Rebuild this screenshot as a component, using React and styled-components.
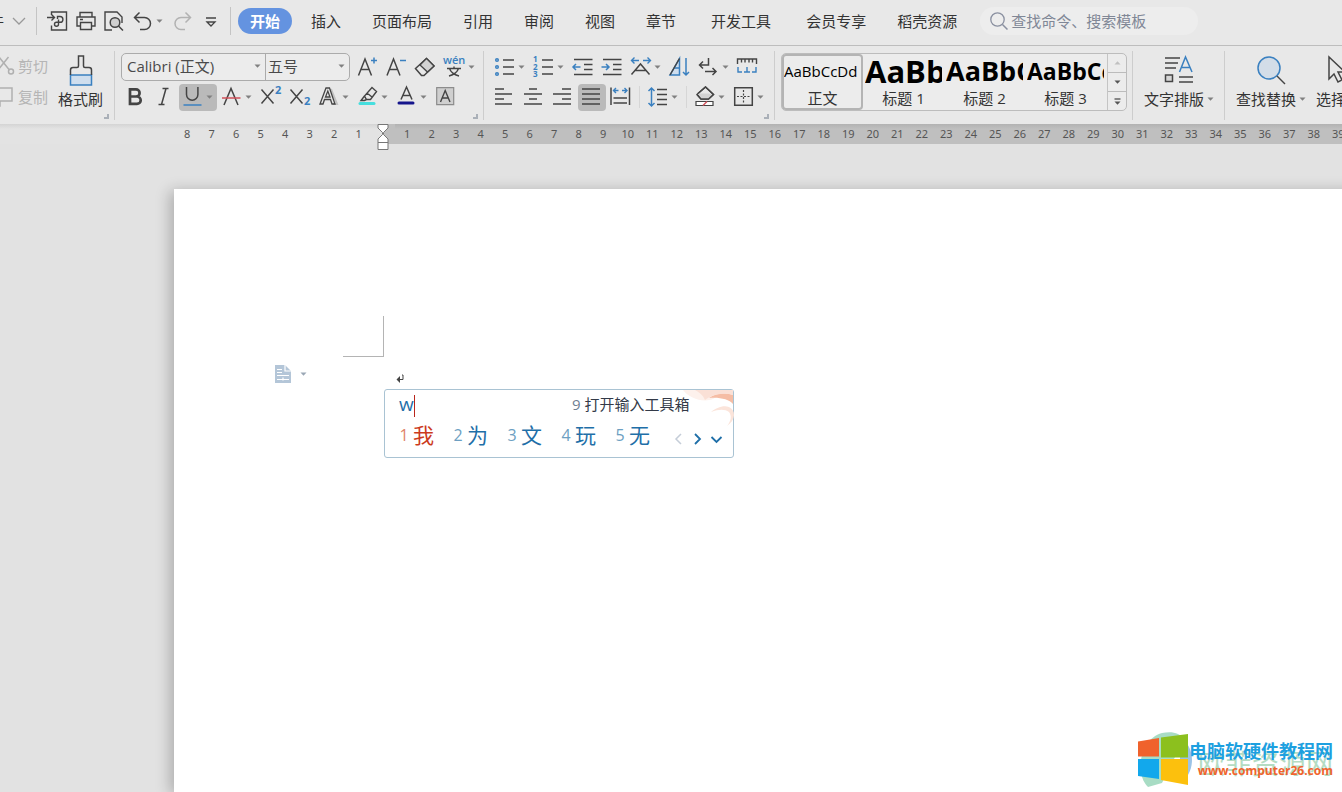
import React from "react";
import styled, { createGlobalStyle, css } from "styled-components";

const INK = "#444444";
const BLUE = "#3a80c0";

const Global = createGlobalStyle`
  * { box-sizing: border-box; }
  html, body { margin: 0; padding: 0; }
  body { background: #e2e2e2; overflow: hidden; font-family: "Open Sans", "Noto Sans CJK SC", sans-serif; font-size: 15px; line-height: 20px; color: #333; }
  button { font: inherit; color: inherit; background: none; border: 0; padding: 0; margin: 0; cursor: pointer; white-space: nowrap; }
  svg { display: block; flex: none; fill: none; stroke: ${INK}; stroke-width: 1.5; overflow: visible; }
`;

const Window = styled.main`
  display: flex;
  flex-direction: column;
  height: 100vh;
  overflow: hidden;
  position: relative;
`;

/* ---------- header ---------- */
const Header = styled.header`
  display: flex;
  align-items: center;
  height: 46px;
  padding-bottom: 3px;
  background: #e8e8e8;
  border-bottom: 1px solid #bdbdbd;
  flex: none;
  overflow: hidden;
`;
const FileMenu = styled.button`
  display: flex;
  align-items: center;
  gap: 8px;
  margin-left: -26px;
  width: 62px;
  flex: none;
`;
const VLine = styled.span`
  width: 1px;
  height: 28px;
  background: #c4c4c4;
  flex: none;
`;
const QuickBar = styled.div`
  display: flex;
  align-items: center;
  padding-left: 10px;
  width: 193px;
  flex: none;
`;
const QuickButton = styled.button`
  display: flex;
  align-items: center;
  gap: 3px;
  width: ${(p) => (p.$split ? 41 : 29)}px;
`;
const Tabs = styled.nav`
  display: flex;
  align-items: center;
  gap: 1px;
  padding-left: 7px;
`;
const Tab = styled.button`
  height: 26px;
  padding: 0 15px;
  margin-left: ${(p) => (p.$spaced ? 4 : 0)}px;
  ${(p) =>
    p.$active &&
    css`
      padding: 0 12px;
      margin-right: 3px;
      border-radius: 13px;
      background: #6493e0;
      color: #fff;
      font-weight: 700;
    `}
`;
const Search = styled.label`
  display: flex;
  align-items: center;
  gap: 2px;
  width: 218px;
  height: 28px;
  margin-left: 8px;
  padding-left: 9px;
  border-radius: 14px;
  background: #ededed;
  flex: none;
`;
const SearchInput = styled.input`
  border: 0;
  outline: 0;
  padding: 0;
  background: none;
  font: inherit;
  width: 180px;
  &::placeholder { color: #808796; opacity: 1; }
`;

/* ---------- ribbon ---------- */
const Ribbon = styled.section`
  display: flex;
  height: 78px;
  background: #e8e8e8;
  flex: none;
  overflow: hidden;
`;
const Group = styled.div`
  display: flex;
  flex-direction: column;
  gap: 2px;
  padding: 7px ${(p) => p.$right ?? 5}px 0 ${(p) => p.$left ?? 6}px;
  width: ${(p) => (p.$w ? p.$w + "px" : "auto")};
  flex: none;
`;
const Divider = styled.span`
  width: 1px;
  margin: 5px 0 4px;
  background: #cdcdcd;
  flex: none;
`;
const Row = styled.div`
  display: flex;
  align-items: center;
  height: 28px;
  gap: 1px;
`;
const Launcher = styled.button`
  align-self: flex-end;
  width: 5px;
  height: 5px;
  margin-top: 1px;
  border-right: 2px solid #aab0b8;
  border-bottom: 2px solid #aab0b8;
`;
const ToolButton = styled.button`
  display: flex;
  align-items: center;
  gap: 3px;
  width: ${(p) => (p.$split ? 38 : 28)}px;
  height: 27px;
  padding: 0 4px;
  border-radius: 4px;
  background: ${(p) => (p.$on ? "#bababa" : "transparent")};
  flex: none;
`;
const ThinLine = styled.span`
  width: 1px;
  height: 22px;
  margin: 0 3px 0 3px;
  background: #d6d6d6;
  flex: none;
`;
const ClipRow = styled.div`
  display: flex;
`;
const ClipColumn = styled.div`
  display: flex;
  flex-direction: column;
  gap: 11px;
  width: 58px;
  padding-top: 3px;
`;
const ClipButton = styled.button`
  display: flex;
  align-items: center;
  gap: 4px;
  height: 20px;
  color: #b5b5b5;
  svg { stroke: #b0b0b0; }
`;
const BigButton = styled.button`
  display: flex;
  flex-direction: column;
  align-items: center;
  align-self: flex-start;
  height: 58px;
  gap: 3px;
  padding-top: 2px;
  flex: none;
`;
const BigLabel = styled.span`
  display: flex;
  align-items: center;
  gap: 3px;
  line-height: 20px;
`;
const Combos = styled.div`
  display: flex;
  width: 229px;
  height: 28px;
  margin-right: 3px;
  border: 1px solid #ababab;
  border-radius: 5px;
  background: #ececec;
`;
const Combo = styled.label`
  display: flex;
  align-items: center;
  width: ${(p) => p.$w}px;
  padding: 0 4px 2px ${(p) => p.$pad}px;
  & + & { border-left: 1px solid #ababab; }
`;
const Select = styled.select`
  appearance: none;
  border: 0;
  outline: 0;
  padding: 0;
  background: none;
  font: inherit;
  color: #4a4a4a;
  flex: 1;
  min-width: 0;
`;

/* ---------- style gallery ---------- */
const Gallery = styled.div`
  display: flex;
  width: 346px;
  height: 58px;
  border: 1px solid #bcbcbc;
  border-radius: 5px;
  background: #ececec;
`;
const StyleCard = styled.button`
  display: flex;
  flex-direction: column;
  align-items: center;
  width: 81px;
  padding: 0 2px;
  border-radius: 4px;
  box-shadow: ${(p) => (p.$on ? "inset 0 0 0 2px #b4b4b4" : "none")};
  flex: none;
`;
const Sample = styled.span`
  width: 77px;
  height: 34px;
  line-height: 34px;
  overflow: hidden;
  text-align: left;
  color: #000;
  font-size: ${(p) => p.$size}px;
  font-weight: ${(p) => (p.$size > 16 ? 700 : 400)};
`;
const GalleryScroll = styled.div`
  display: flex;
  flex-direction: column;
  flex: 1;
  margin-left: 1px;
  border-left: 1px solid #c4c4c4;
`;
const ScrollButton = styled.button`
  flex: 1;
  display: flex;
  align-items: center;
  justify-content: center;
  & + & { border-top: 1px solid #bcbcbc; }
`;

/* ---------- ruler ---------- */
const RULER_DARK = "#bfbfbf";
const Ruler = styled.div`
  display: flex;
  height: 20px;
  padding-left: 175px;
  font-family: "Noto Sans", sans-serif;
  font-size: 11px;
  line-height: 20px;
  color: #555;
  background: linear-gradient(#d4d4d4, #e3e3e3 5px);
  flex: none;
`;
const Ticks = styled.div`
  display: flex;
  width: ${(p) => p.$w}px;
  flex: none;
  background: ${(p) => (p.$dark ? `linear-gradient(#b2b2b2, ${RULER_DARK} 5px)` : "none")};
`;
const Tick = styled.span`
  flex: 1;
  text-align: center;
`;
const MarkerCell = styled.div`
  width: 24px;
  padding-left: 6px;
  flex: none;
  background: linear-gradient(90deg, transparent 50%, ${RULER_DARK} 50%);
`;

/* ---------- document ---------- */
const Paper = styled.article`
  flex: 1;
  margin: 45px -30px 0 174px;
  padding-top: 127px;
  background: #fff;
  box-shadow: -4px 2px 14px rgba(0, 0, 0, 0.24);
`;
const MarginCorner = styled.div`
  width: 41px;
  height: 41px;
  margin-left: 169px;
  border-right: 1px solid #b4b4b4;
  border-bottom: 1px solid #b4b4b4;
`;
const Line = styled.div`
  display: flex;
  position: relative;
  margin: 7px 0 0 101px;
`;
const LineButton = styled.button`
  display: flex;
  align-items: center;
  gap: 8px;
  width: 121px;
  height: 20px;
`;
const Popup = styled.section`
  position: absolute;
  left: 109px;
  top: 25px;
  width: 350px;
  height: 69px;
  padding: 2px 0 0 14px;
  border: 1px solid #a9c3d3;
  border-radius: 3px;
  background: #fff;
`;
const PopupTop = styled.div`
  display: flex;
  align-items: center;
  height: 24px;
`;
const Typed = styled.span`
  display: flex;
  align-items: center;
  width: 173px;
  font-size: 19px;
  line-height: 24px;
  color: #1f6fa8;
`;
const TextCaret = styled.span`
  width: 1px;
  height: 22px;
  margin-top: 3px;
  background: #b8261c;
`;
const Hint = styled.button`
  display: flex;
  gap: 4px;
  color: #333a48;
  line-height: 22px;
  span { color: #6f7f93; }
`;
const Candidates = styled.div`
  display: flex;
  align-items: center;
  height: 38px;
`;
const Candidate = styled.button`
  display: flex;
  align-items: center;
  gap: 4px;
  width: 54px;
  font-size: 21px;
  line-height: 30px;
  color: ${(p) => (p.$first ? "#cc3a1c" : "#1f6fa8")};
  span { width: 10px; font-size: 16px; color: ${(p) => (p.$first ? "#e08468" : "#6d9fc2")}; }
`;
const Pager = styled.div`
  display: flex;
  gap: 8px;
  padding: 7px 0 0 4px;
`;
const Swirl = styled.svg`
  position: absolute;
  right: 0;
  top: 0;
`;

/* ---------- site mark ---------- */
const SiteMark = styled.a`
  position: absolute;
  right: 9px;
  bottom: 5px;
  display: flex;
  align-items: center;
  gap: 1px;
  text-decoration: none;
`;
const SiteText = styled.span`
  position: relative;
  display: flex;
  flex-direction: column;
  align-items: flex-end;
  strong { position: relative; font-size: 18px; line-height: 22px; color: #1da0e0; white-space: nowrap; }
  small { position: relative; font-size: 12px; font-weight: 700; line-height: 18px; color: #f0642d; }
`;
const FadedName = styled.span`
  position: absolute;
  right: 0;
  top: 10px;
  font-size: 27px;
  line-height: 28px;
  white-space: nowrap;
  color: #b4dcc2;
`;

const Caret = ({ color = "#808080" }) => (
  <svg width="7" height="4" viewBox="0 0 7 4">
    <path d="M0.5 0.5h6l-3 3.2z" fill={color} stroke="none" />
  </svg>
);

const Icon = ({ children, w = 20, h = 20 }) => (
  <svg width={w} height={h} viewBox={`0 0 ${w} ${h}`} aria-hidden="true">
    {children}
  </svg>
);

const Tool = ({ label, split, on, children }) => (
  <ToolButton $split={split} $on={on} aria-label={label}>
    <Icon>{children}</Icon>
    {split && <Caret />}
  </ToolButton>
);

const range = (n) => Array.from({ length: n }, (_, i) => i + 1);

const tabs = [
  ["插入"], ["页面布局"], ["引用"], ["审阅"], ["视图"], ["章节"],
  ["开发工具", true], ["会员专享", true], ["稻壳资源"],
];
const styles = [["正文", "AaBbCcDd", 15], ["标题 1", "AaBb", 31], ["标题 2", "AaBbC", 27], ["标题 3", "AaBbCc", 23]];
const words = ["我", "为", "文", "玩", "无"];

export default function App() {
  return (
    <Window>
      <Global />
      <Header>
        <FileMenu>
          文件
          <Icon w={14} h={8}><path d="M1 1l6 6 6-6" stroke="#999" strokeWidth="1.3" /></Icon>
        </FileMenu>
        <VLine />
        <QuickBar>
          <QuickButton aria-label="输出为PDF">
            <Icon><path d="M4.5 4V1h15v18h-15v-4.500M0 6.500h7M4.500 3.500l3 3-3 3" strokeWidth="1.400" /><path d="M10.500 8V5.500h2.500a2.900 2.900 0 0 1 0 5.800h-3.500a2 2 0 1 0 2 2V8.500" strokeWidth="1.400" /></Icon>
          </QuickButton>
          <QuickButton aria-label="打印">
            <Icon><path d="M4 6V1.500h12V6M4 15H1V6h18v9h-3M4.500 11.500h11v7h-11zM4 8.500h3" strokeWidth="1.400" /></Icon>
          </QuickButton>
          <QuickButton aria-label="打印预览">
            <Icon><path d="M8 19H1V1h12l5 5v6" strokeWidth="1.400" /><circle cx="11" cy="11.500" r="4.800" fill="#d0d0d0" /><path d="M14.500 15l4.500 4.500" /></Icon>
          </QuickButton>
          <QuickButton $split aria-label="撤销">
            <Icon><path d="M6.500 1.500L1.500 6.500l5 5M2 6.500h9.500a6 6 0 0 1 0 12H7" /></Icon>
            <Caret />
          </QuickButton>
          <QuickButton aria-label="恢复">
            <Icon><path d="M12.500 1.500l5 5-5 5M17 6.500H8a6 6 0 0 0 0 12h4" stroke="#b2b2b2" /></Icon>
          </QuickButton>
          <QuickButton aria-label="自定义快速访问">
            <Icon><path d="M5 7h10M6 11l4 4 4-4z" strokeWidth="1.300" /></Icon>
          </QuickButton>
        </QuickBar>
        <VLine />
        <Tabs>
          <Tab $active>开始</Tab>
          {tabs.map(([t, s]) => <Tab key={t} $spaced={s}>{t}</Tab>)}
        </Tabs>
        <Search>
          <Icon><circle cx="8.500" cy="8.500" r="6.700" stroke="#8a90a0" strokeWidth="1.300" /><path d="M13.500 13.500l5 5" stroke="#8a90a0" /></Icon>
          <SearchInput aria-label="搜索" placeholder="查找命令、搜索模板" />
        </Search>
      </Header>

      <Ribbon>
        <Group $w={114} $left={0}>
          <ClipRow>
            <ClipColumn>
              <ClipButton>
                <Icon w={14} h={20}><path d="M-1 1L9 13.500M8.500 1L-2 14" /><circle cx="11" cy="15.500" r="2.500" /></Icon>剪切
              </ClipButton>
              <ClipButton>
                <Icon w={14} h={20}><path d="M-2 1h14v13H-2M0 14v5h-3" /></Icon>复制
              </ClipButton>
            </ClipColumn>
            <BigButton>
              <Icon w={24} h={31}><path d="M1.500 20h21v10h-21z" fill="#cfdeee" stroke={BLUE} /><path d="M1.500 20v-5c0-1.500 1-2.500 2.500-2.500h4c1 0 1.500-0.500 1.500-1.500V1h5v10c0 1 0.500 1.500 1.500 1.500h4c1.500 0 2.500 1 2.500 2.500v5" /></Icon>
              <BigLabel>格式刷</BigLabel>
            </BigButton>
          </ClipRow>
          <Launcher aria-label="剪贴板设置" />
        </Group>
        <Divider />
        <Group $w={368}>
          <Row>
            <Combos>
              <Combo $w={143} $pad={5}>
                <Select aria-label="字体"><option>Calibri (正文)</option></Select><Caret />
              </Combo>
              <Combo $w={84} $pad={2}>
                <Select aria-label="字号"><option>五号</option></Select><Caret />
              </Combo>
            </Combos>
            <Tool label="增大字号"><path d="M0.500 18.500L7 2 13.500 18.500M2.800 12.500h8.400" /><path d="M13 3.500h6M16 0.500v6" stroke={BLUE} /></Tool>
            <Tool label="减小字号"><path d="M0 18.500L6.500 2 13 18.500M2.300 12.500h8.400" /><path d="M13 3.500h6" stroke={BLUE} /></Tool>
            <Tool label="清除格式"><path d="M-0.500 11.500L10.500 1.500l7.500 7.500-10 9.500H5.500z" /><path d="M4 8l6.500-6.500 7.500 7.500-6.500 6z" fill="#d2d2d2" strokeWidth="1.300" /></Tool>
            <Tool label="拼音指南" split>
              <text x="-2" y="7" fontSize="11" fontWeight="600" fill={BLUE} stroke="none">wén</text>
              <path d="M2 11.500h14M9 9.500v2M4.500 11.500c1 3 4 6 9.500 7.500M13.500 11.500c-1 3-4 6-9.500 7.500" strokeWidth="1.400" />
            </Tool>
          </Row>
          <Row>
            <Tool label="加粗"><path d="M5 2.300h6a3.600 3.600 0 0 1 0 7.200H5zM5 9.500h7a3.700 3.700 0 0 1 0 7.400H5z" strokeWidth="2.700" /></Tool>
            <Tool label="倾斜"><path d="M8.500 1.500h6M4.500 17.500h6M12 1.500L7.500 17.500" /></Tool>
            <Tool label="下划线" split on><path d="M3.500 0v7.500a5.700 5.700 0 0 0 11.400 0V0" /><path d="M0.500 18h18" stroke={BLUE} /></Tool>
            <Tool label="删除线" split><path d="M2 18L9 1.500 16 18" /><path d="M0 11h18.500" stroke="#d0505a" /></Tool>
            <Tool label="上标"><path d="M0.500 2.500l12 14M12.500 2.500l-12 14" /><text x="14" y="7" fontSize="11" fontWeight="700" fill={BLUE} stroke="none">2</text></Tool>
            <Tool label="下标"><path d="M0.500 2.500l12 14M12.500 2.500l-12 14" /><text x="14" y="18" fontSize="11" fontWeight="700" fill={BLUE} stroke="none">2</text></Tool>
            <Tool label="文字效果" split><path d="M12 2l6 15h-4" stroke="#c2c2c2" strokeWidth="2" /><path d="M1 17L7 1h3.500l5.500 16h-3l-1.500-4.500H5.500L4 17zM6.500 10h4.500L8.800 4z" strokeWidth="1.300" /></Tool>
            <Tool label="突出显示" split><path d="M14 0.500l4.500 4-6 8H8.500L6.500 9zM6.500 9l-3.500 4.500h3.500L8.500 12.500M9 6l5 4" strokeWidth="1.400" /><path d="M2 16.500h14" stroke="#46dede" strokeWidth="3" strokeLinecap="round" /></Tool>
            <Tool label="字体颜色" split><path d="M4 12.500L9.500 0 15 12.500M6 8.500h7" /><path d="M2 16h14" stroke="#15158c" strokeWidth="3" strokeLinecap="round" /></Tool>
            <Tool label="字符底纹"><path d="M0.700 0.700h17v17h-17z" fill="#cfcfcf" stroke="#8c8c8c" strokeWidth="1.200" /><path d="M4.500 15L9.200 3.500 14 15M6 11h6.400" strokeWidth="1.400" /></Tool>
          </Row>
          <Launcher aria-label="字体设置" />
        </Group>
        <Divider />
        <Group $w={290} $left={7}>
          <Row>
            <Tool label="项目符号" split><path d="M8 3h11M8 10h11M8 17h11" /><g stroke={BLUE}><circle cx="2" cy="3" r="1.300" /><circle cx="2" cy="10" r="1.300" /><circle cx="2" cy="17" r="1.300" /></g></Tool>
            <Tool label="编号" split>
              <path d="M8 3h11M8 10h11M8 17h11" />
              <g fontSize="8" fontWeight="700" fill={BLUE} stroke="none"><text x="-1" y="5">1</text><text x="-1" y="13">2</text><text x="-1" y="20">3</text></g>
            </Tool>
            <Tool label="减少缩进"><path d="M1 2.500h18.500M11 7.500h8.500M11 12.500h8.500M1 17.500h18.500" /><path d="M7.500 10H0M3 7l-3 3 3 3" stroke={BLUE} /></Tool>
            <Tool label="增加缩进"><path d="M1 2.500h18.500M11 7.500h8.500M11 12.500h8.500M1 17.500h18.500" /><path d="M-0.500 10H7M4 7l3 3-3 3" stroke={BLUE} /></Tool>
            <Tool label="中文版式" split><path d="M0.500 17.500L9.500 7l9 10.500M4 13.500h11" /><path d="M8 3.500H0.500M3.500 0.500l-3 3 3 3M12 3.500h7.500M16.500 0.500l3 3-3 3" stroke={BLUE} strokeWidth="1.400" /></Tool>
            <Tool label="排序"><path d="M0 18L9.500 1.500V18zM4 11h5.500" stroke={BLUE} fill="#cfdeee" /><path d="M0 18L9.500 1.500" /><path d="M16 1v17M13 15l3 3 3-3" stroke={BLUE} /></Tool>
            <Tool label="换行" split><path d="M9.500 1v7H0.500M4 4.500L0.500 8 4 11.500M6 14.500h11M13.500 11l3.500 3.500-3.500 3.500" /></Tool>
            <Tool label="制表位"><path d="M-0.500 7V2h19v5M3.500 2v3.500M7 2v3.500M11 2v3.500M14.500 2v3.500" strokeWidth="1.400" /><path d="M0 10v5h4M9 10v5M6 15h6M18 10v5h-4" stroke={BLUE} strokeWidth="1.400" /></Tool>
          </Row>
          <Row>
            <Tool label="左对齐"><path d="M0 2h9M0 7h17M0 12h9M0 17h17" /></Tool>
            <Tool label="居中"><path d="M5 2h8M0 7h18M5 12h8M0 17h18" /></Tool>
            <Tool label="右对齐"><path d="M9 2h9M0 7h18M9 12h9M0 17h18" /></Tool>
            <Tool label="两端对齐" on><path d="M0 2h18M0 7h18M0 12h18M0 17h18" /></Tool>
            <Tool label="分散对齐"><path d="M0 0.500V18M18.500 0.500V18M2.500 11h13.500M2.500 16h13.500" /><path d="M7.500 3.500h-5M5 1L2.500 3.500 5 6M11 3.500h5M13.500 1l2.500 2.500L13.500 6" stroke={BLUE} strokeWidth="1.400" /></Tool>
            <ThinLine />
            <Tool label="行距" split><path d="M9 2.500h10M9 7.500h10M9 12.500h10M9 17.500h10" /><path d="M3.500 1v18M0.500 4l3-3 3 3M0.500 16l3 3 3-3" stroke={BLUE} /></Tool>
            <ThinLine />
            <Tool label="底纹颜色" split><path d="M3 6.500L10.500 0l8 7.500-5 4.500H6L2 7.500z" strokeWidth="1.400" /><path d="M3 6.500h10.500l4 1L13.500 12H6z" fill="#d2d2d2" stroke="none" /><path d="M3 6.500L10.500 0l8 7.500-5 4.500H6L2 7.500" strokeWidth="1.400" /><path d="M1 14.500h17v4H1z" fill="#fff" strokeWidth="1.200" /><path d="M8 18.500l4-4" stroke="#d0505a" /></Tool>
            <Tool label="边框" split><path d="M0.700 0.700h17.600v17.600H0.700z" /><path d="M9.500 3v13M3 9.500h13" strokeWidth="1.200" strokeDasharray="2 1.500" /></Tool>
          </Row>
          <Launcher aria-label="段落设置" />
        </Group>
        <Divider />
        <Group $w={357}>
          <Gallery>
            {styles.map(([name, sample, size], i) => (
              <StyleCard key={name} $on={i === 0}>
                <Sample $size={size}>{sample}</Sample>
                {name}
              </StyleCard>
            ))}
            <GalleryScroll>
              <ScrollButton aria-label="上一行"><Icon w={7} h={4}><path d="M0.500 3.500h6l-3-3.200z" fill="#c0c0c0" stroke="none" /></Icon></ScrollButton>
              <ScrollButton aria-label="下一行"><Caret color="#555" /></ScrollButton>
              <ScrollButton aria-label="更多样式"><Icon w={7} h={7}><path d="M0.500 1h6" strokeWidth="1.200" /><path d="M0.500 3.500h6l-3 3.200z" fill="#555" stroke="none" /></Icon></ScrollButton>
            </GalleryScroll>
          </Gallery>
        </Group>
        <Divider />
        <Group $w={91} $left={11}>
          <BigButton>
            <Icon w={30} h={31}><path d="M1 3h15M1 8h13M1 13h11M15 22h14M15 27h14" /><path d="M1.500 20h7v6.500h-7z" fill="#d6d6d6" /><path d="M15.500 17L21.500 2 28 17M18 12.500h7.500" stroke={BLUE} /></Icon>
            <BigLabel>文字排版<Caret /></BigLabel>
          </BigButton>
        </Group>
        <Divider />
        <Group $left={11}>
          <BigButton>
            <Icon w={30} h={31}><circle cx="13" cy="13" r="11" fill="#d3dde8" stroke={BLUE} /><path d="M21 21l8 8" /></Icon>
            <BigLabel>查找替换<Caret /></BigLabel>
          </BigButton>
        </Group>
        <Group $left={5} $right={0}>
          <BigButton>
            <Icon w={18} h={31}><path d="M2 2v22l5-5 4 8 4-2-4-8h7z" /></Icon>
            <BigLabel>选择<Caret /></BigLabel>
          </BigButton>
        </Group>
      </Ribbon>

      <Ruler>
        <Ticks $w={196}>{range(8).reverse().map((n) => <Tick key={n}>{n}</Tick>)}</Ticks>
        <MarkerCell>
          <Icon w={12} h={26}>
            <path d="M1 0.500h10v3.500L6.500 8.500v2L11 15v10.500H1V15l4.500-4.500v-2L1 4zM1 18.500h10" fill="#fff" stroke="#777" strokeWidth="1" />
          </Icon>
        </MarkerCell>
        <Ticks $w={1225} $dark>{range(50).map((n) => <Tick key={n}>{n}</Tick>)}</Ticks>
      </Ruler>

      <Paper>
        <MarginCorner />
        <Line>
          <LineButton aria-label="段落布局">
            <Icon w={17} h={18}><path d="M0 0h10l6 6v12H0z" fill="#b4c6d8" stroke="none" /><path d="M10 0v6h6M2 4.500h5M2 7.500h5M2 10.500h12M2 14.500h12M8 12.500v3" stroke="#fff" strokeWidth="1.200" /></Icon>
            <Caret color="#9aa7b5" />
          </LineButton>
          <Icon w={8} h={20}><path d="M6 11h1v4.500H3" strokeWidth="1" /><path d="M4 12v7l-3.500-3.500z" fill={INK} stroke="none" /></Icon>
          <Popup>
            <Swirl width="54" height="40" viewBox="0 0 54 40">
              <g stroke="none">
                <path d="M4 0h50v9C48 4 40 5 34 9 24 13 10 8 4 0z" fill="#fdf1ec" />
                <path d="M30 8c5-4 14-6 24-3v9c-4-5-14-7-24-6z" fill="#f5bda5" />
                <path d="M16 0h38v5C44 2 32 5 26 10 24 5 20 2 16 0z" fill="#fae0d6" />
                <path d="M32 22c8-3 14-3 18 0 3 4 2 9-2 14 9-6 9-16 2-19-6-2-13 1-18 5z" fill="#fbe4da" />
              </g>
            </Swirl>
            <PopupTop>
              <Typed>w<TextCaret /></Typed>
              <Hint><span>9</span>打开输入工具箱</Hint>
            </PopupTop>
            <Candidates>
              {words.map((w, i) => <Candidate key={w} $first={i === 0}><span>{i + 1}</span>{w}</Candidate>)}
              <Pager>
                <button aria-label="上一页"><Icon w={11} h={12}><path d="M8 1L3 6l5 5" stroke="#c5cdd8" /></Icon></button>
                <button aria-label="下一页"><Icon w={11} h={12}><path d="M3 1l5 5-5 5" stroke="#1f6fa8" strokeWidth="1.800" /></Icon></button>
                <button aria-label="展开"><Icon w={11} h={12}><path d="M0.500 4l5 5 5-5" stroke="#1f6fa8" strokeWidth="1.800" /></Icon></button>
              </Pager>
            </Candidates>
          </Popup>
        </Line>
      </Paper>

      <SiteMark href="#">
        <Icon w={50} h={54}>
          <g stroke="none">
            <path d="M10 54C-4 40 2 6 24 0c10-2 18 0 22 6L24 50z" fill="#a8dcc4" />
            <path d="M42 4c16 10 16 36 0 46z" fill="#9cc3e6" />
            <path d="M0 8.500L21 5v18.500H0z" fill="#f0622c" />
            <path d="M23 4.500L50 1v23.500H23z" fill="#8cc01e" />
            <path d="M0 26h21v20L0 43z" fill="#12a8ec" />
            <path d="M23 26h27v26l-27-5z" fill="#fcc00d" />
          </g>
        </Icon>
        <SiteText>
          <FadedName>欧菲资源网</FadedName>
          <strong>电脑软硬件教程网</strong>
          <small>www.computer26.com</small>
        </SiteText>
      </SiteMark>
    </Window>
  );
}
